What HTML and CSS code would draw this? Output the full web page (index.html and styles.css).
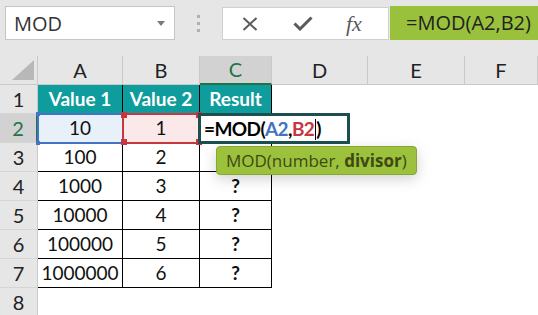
FILE: index.html
```html
<!DOCTYPE html>
<html lang="en">
<head>
  <meta charset="UTF-8">
  <meta name="viewport" content="width=device-width, initial-scale=1.0">
  <title>MOD function</title>
  <link rel="stylesheet" href="styles.css">
</head>
<body>
  <div id="toolbar">
    <div id="name-box">
      <span>MOD</span>
      <svg class="caret" width="8" height="5" viewBox="0 0 8 5"><path d="M0 0h8L4 5z" fill="#7a7a7a"/></svg>
    </div>
    <div id="grip"><i></i><i></i><i></i></div>
    <div id="fx-buttons">
      <svg width="16" height="14" viewBox="0 0 16 14"><path d="M1.5 1l13 12M14.5 1l-13 12" stroke="#5a5a5a" stroke-width="2" fill="none"/></svg>
      <svg width="20" height="15" viewBox="0 0 20 15"><path d="M1.5 7.5l5.5 5.5L18.5 1.5" stroke="#5a5a5a" stroke-width="3" fill="none"/></svg>
      <span class="fx">fx</span>
    </div>
    <div id="formula-bar">=MOD(A2,B2)</div>
  </div>

  <div id="sheet">
    <div class="row col-heads">
      <div class="corner"><svg width="22" height="20" viewBox="0 0 22 20"><path d="M22 0V20H0z" fill="#b8b8b8"/></svg></div>
      <div class="col-head">A</div>
      <div class="col-head">B</div>
      <div class="col-head active">C</div>
      <div class="col-head">D</div>
      <div class="col-head">E</div>
      <div class="col-head">F</div>
    </div>
    <div class="row">
      <div class="row-head">1</div>
      <div class="cell title">Value 1</div>
      <div class="cell title">Value 2</div>
      <div class="cell title">Result</div>
    </div>
    <div class="row">
      <div class="row-head active">2</div>
      <div class="cell fill-a">10</div>
      <div class="cell fill-b">1</div>
      <div class="cell"></div>
    </div>
    <div class="row">
      <div class="row-head">3</div>
      <div class="cell">100</div>
      <div class="cell">2</div>
      <div class="cell"></div>
    </div>
    <div class="row">
      <div class="row-head">4</div>
      <div class="cell">1000</div>
      <div class="cell">3</div>
      <div class="cell q">?</div>
    </div>
    <div class="row">
      <div class="row-head">5</div>
      <div class="cell">10000</div>
      <div class="cell">4</div>
      <div class="cell q">?</div>
    </div>
    <div class="row">
      <div class="row-head">6</div>
      <div class="cell">100000</div>
      <div class="cell">5</div>
      <div class="cell q">?</div>
    </div>
    <div class="row">
      <div class="row-head">7</div>
      <div class="cell">1000000</div>
      <div class="cell">6</div>
      <div class="cell q">?</div>
    </div>
    <div class="row">
      <div class="row-head">8</div>
    </div>

    <!-- reference highlights and the in-cell editor sit over the grid -->
    <div class="ref ref-a"><i class="tl"></i><i class="tr"></i><i class="bl"></i><i class="br"></i></div>
    <div class="ref ref-b"><i class="tl"></i><i class="tr"></i><i class="bl"></i><i class="br"></i></div>
    <div id="editor">=MOD(<span class="arg-a">A2</span>,<span class="arg-b">B2</span><span class="cursor"></span>)</div>
    <div id="tooltip">MOD(number, <b>divisor</b>)</div>
  </div>
</body>
</html>
```

FILE: styles.css
```css
body {
  margin: 0;
  padding: 0;
  width: 538px;
  height: 315px;
  overflow: hidden;
  background-color: #e6e6e6;
  font-family: Lato, "Liberation Sans", sans-serif;
}

#toolbar {
  height: 56px;
  display: flex;
  align-items: flex-start;
  padding-top: 6px;
  box-sizing: border-box;
}

#name-box {
  margin-left: 5px;
  width: 170px;
  height: 34px;
  box-sizing: border-box;
  border: 1px solid #c6c6c6;
  background-color: #fff;
  display: flex;
  align-items: center;
  justify-content: space-between;
  padding: 0 9px 0 8px;
  font-family: "Open Sans", sans-serif;
  font-size: 20px;
  color: #333;
}

#grip {
  width: 47px;
  height: 34px;
  display: flex;
  flex-direction: column;
  align-items: center;
  justify-content: center;
  gap: 4px;
}

#grip i {
  width: 3px;
  height: 3px;
  background-color: #b0b0b0;
}

#fx-buttons {
  width: 167px;
  height: 33px;
  margin-top: 1px;
  box-sizing: border-box;
  border: 1px solid #d0d0d0;
  background-color: #fff;
  display: flex;
  align-items: center;
  padding-left: 19px;
  gap: 35px;
}

.fx {
  font-family: "Liberation Serif", serif;
  font-style: italic;
  font-size: 22px;
  color: #5a5a5a;
  margin-left: -2px;
}

#formula-bar {
  flex: 1;
  margin-left: 1px;
  height: 34px;
  background-color: #99c13c;
  font-family: "Open Sans", sans-serif;
  font-size: 20px;
  line-height: 34px;
  padding-left: 16px;
  color: #222;
}

#sheet {
  position: relative;
  background-color: #fff;
}

.row {
  display: grid;
  grid-template-columns: 38px 85px 77px 72px 96px 97px 73px;
  height: 29px;
}

.corner, .col-head {
  background-color: #e6e6e6;
  border-right: 1px solid #c9c9c9;
  border-bottom: 1px solid #c9c9c9;
}

.corner {
  display: flex;
  align-items: flex-end;
  justify-content: flex-end;
  padding: 0 3px 4px 0;
}

.col-head {
  text-align: center;
  font-size: 20px;
  line-height: 28px;
  color: #222;
}

.col-head.active {
  background-color: #d2d2d2;
  border-bottom: 2px solid #217346;
  color: #217346;
  line-height: 27px;
}

.row-head {
  background-color: #e6e6e6;
  border-right: 1px solid #c9c9c9;
  border-bottom: 1px solid #d6d6d6;
  text-align: center;
  font-size: 20px;
  line-height: 28px;
  color: #222;
}

.row-head.active {
  background-color: #d2d2d2;
  border-right: 2px solid #217346;
  color: #217346;
}

.cell {
  border-right: 1px solid #000;
  border-bottom: 1px solid #000;
  text-align: center;
  font-size: 19px;
  line-height: 28px;
  color: #111;
}

.cell.title {
  background-color: #0e9c9c;
  color: #fff;
  font-weight: bold;
}

.cell.q {
  font-weight: bold;
}

.fill-a {
  background-color: #e8f0fa;
}

.fill-b {
  background-color: #fbe9ea;
}

.ref {
  position: absolute;
  box-sizing: border-box;
  height: 31px;
  top: 57px;
}

.ref i {
  position: absolute;
  width: 5px;
  height: 5px;
}

.ref .tl { left: -3px; top: -3px; }
.ref .tr { right: -3px; top: -3px; }
.ref .bl { left: -3px; bottom: -3px; }
.ref .br { right: -3px; bottom: -3px; }

.ref-a {
  left: 37px;
  width: 87px;
  border: 2px solid #4472c4;
}

.ref-a i {
  background-color: #4472c4;
  width: 4px;
  height: 4px;
}

.ref-b {
  left: 122px;
  width: 79px;
  border: 2px solid #c8373f;
}

.ref-b i {
  background-color: #c8373f;
  width: 6px;
  height: 6px;
}

#editor {
  position: absolute;
  left: 198px;
  top: 57px;
  width: 152px;
  height: 31px;
  box-sizing: border-box;
  border: 3px solid #1d4f51;
  background-color: #fff;
  padding-left: 3px;
  font-size: 19px;
  font-weight: bold;
  letter-spacing: -0.6px;
  line-height: 25px;
  color: #000;
}

.arg-a {
  color: #4472c4;
}

.arg-b {
  color: #c8373f;
}

.cursor {
  display: inline-block;
  width: 1px;
  height: 21px;
  background-color: #000;
  vertical-align: -4px;
  margin-left: 1px;
}

#tooltip {
  position: absolute;
  left: 216px;
  top: 90px;
  width: 201px;
  height: 29px;
  box-sizing: border-box;
  border: 1px solid #86a832;
  border-radius: 4px;
  background-color: #9cc13c;
  box-shadow: 0 4px 14px rgba(0, 0, 0, 0.18);
  font-family: "Open Sans", sans-serif;
  font-size: 17px;
  line-height: 27px;
  padding-left: 9px;
  color: #3d4a14;
}
```
